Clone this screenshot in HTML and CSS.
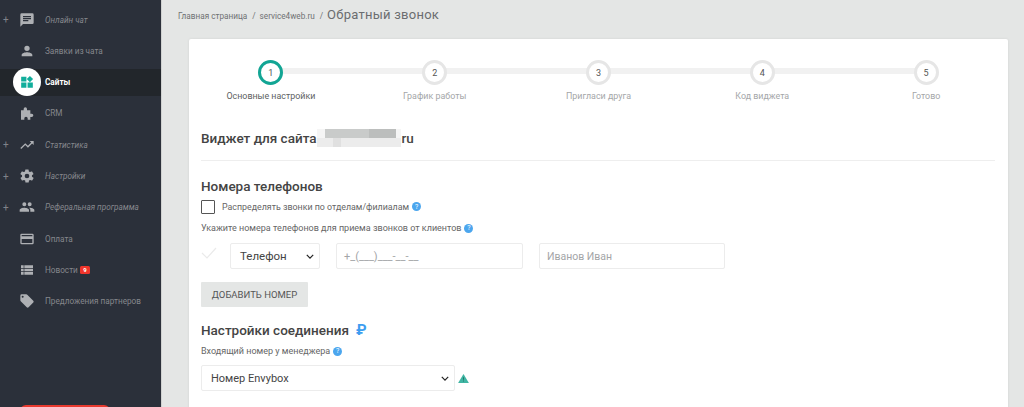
FILE: index.html
```html
<!DOCTYPE html>
<html lang="ru">
<head>
<meta charset="utf-8">
<title>Обратный звонок</title>
<link rel="stylesheet" href="styles.css">
</head>
<body>
<div class="app">
  <aside class="sidebar">
    <nav class="menu">
      <a class="item"><span class="plus">+</span><svg class="ic" viewBox="0 0 24 24"><path d="M20 2H4a2 2 0 0 0-2 2v18l4-4h14a2 2 0 0 0 2-2V4a2 2 0 0 0-2-2zM6 9h12v2H6V9zm8 5H6v-2h8v2zm4-6H6V6h12v2z"/></svg><span class="label it">Онлайн чат</span></a>
      <a class="item"><span class="plus"></span><svg class="ic" viewBox="0 0 24 24"><path d="M12 12a4 4 0 1 0 0-8 4 4 0 0 0 0 8zm0 2c-2.7 0-8 1.3-8 4v2h16v-2c0-2.700-5.300-4-8-4z"/></svg><span class="label">Заявки из чата</span></a>
      <a class="item active"><span class="plus"></span><span class="bubble"><svg class="ic-active" viewBox="0 0 24 24"><path d="M2 3h9v8H2zM2 13h9v9H2zM13 13h9v9h-9zM17 1.600 22.400 7 17 12.400 11.600 7z"/></svg></span><span class="label">Сайты</span></a>
      <a class="item"><span class="plus"></span><svg class="ic" viewBox="0 0 24 24"><path d="M3 8h4V6a2.500 2.500 0 0 1 5 0v2h5v5h2a2.500 2.500 0 0 1 0 5h-2v4h-4v-2a2.500 2.500 0 0 0-5 0v2H3z"/></svg><span class="label">CRM</span></a>
      <a class="item"><span class="plus">+</span><svg class="ic" viewBox="0 0 24 24"><path d="M16 6l2.300 2.300-4.900 4.900-4-4L2 16.600 3.400 18l6-6 4 4 6.300-6.300L22 12V6z"/></svg><span class="label it">Статистика</span></a>
      <a class="item"><span class="plus">+</span><svg class="ic" viewBox="0 0 24 24"><path d="M19.400 13a7.500 7.500 0 0 0 0-2l2.100-1.600a.5.500 0 0 0 .1-.6l-2-3.500a.5.500 0 0 0-.6-.2l-2.500 1a7.300 7.300 0 0 0-1.700-1l-.4-2.600a.5.500 0 0 0-.5-.4h-4a.5.500 0 0 0-.5.400l-.4 2.600a7.700 7.700 0 0 0-1.700 1l-2.500-1a.5.500 0 0 0-.6.200l-2 3.500a.5.500 0 0 0 .1.600L4.600 11a7.900 7.900 0 0 0 0 2l-2.100 1.600a.5.500 0 0 0-.1.600l2 3.500c.1.200.4.300.6.200l2.500-1c.5.400 1.100.7 1.700 1l.4 2.600c0 .2.200.4.500.4h4c.3 0 .5-.2.500-.4l.4-2.600a7.300 7.300 0 0 0 1.700-1l2.500 1c.2.100.5 0 .6-.2l2-3.500a.5.500 0 0 0-.1-.6L19.400 13zM12 15.500a3.500 3.500 0 1 1 0-7 3.500 3.500 0 0 1 0 7z"/></svg><span class="label it">Настройки</span></a>
      <a class="item"><span class="plus">+</span><svg class="ic" viewBox="0 0 24 24"><path d="M16 11a3 3 0 1 0 0-6 3 3 0 0 0 0 6zm-8 0a3 3 0 1 0 0-6 3 3 0 0 0 0 6zm0 2c-2.300 0-7 1.200-7 3.500V19h14v-2.500C15 14.200 10.300 13 8 13zm8 0h-1c1.200.8 2 2 2 3.500V19h6v-2.500c0-2.300-4.700-3.500-7-3.500z"/></svg><span class="label it">Реферальная программа</span></a>
      <a class="item"><span class="plus"></span><svg class="ic" viewBox="0 0 24 24"><path d="M20 4H4a2 2 0 0 0-2 2v12a2 2 0 0 0 2 2h16a2 2 0 0 0 2-2V6a2 2 0 0 0-2-2zm0 14H4v-6h16v6zm0-10H4V6h16v2z"/></svg><span class="label">Оплата</span></a>
      <a class="item"><span class="plus"></span><svg class="ic" viewBox="0 0 24 24"><path d="M3 5h4v4H3zM8 5h13v4H8zM3 10h4v4H3zM8 10h13v4H8zM3 15h4v4H3zM8 15h13v4H8z"/></svg><span class="label">Новости</span><span class="badge">9</span></a>
      <a class="item"><span class="plus"></span><svg class="ic" viewBox="0 0 24 24"><path d="M21.400 11.600l-9-9A2 2 0 0 0 11 2H4a2 2 0 0 0-2 2v7c0 .6.200 1.100.6 1.400l9 9a2 2 0 0 0 2.800 0l7-7a2 2 0 0 0 0-2.800zM5.500 7a1.500 1.500 0 1 1 0-3 1.500 1.500 0 0 1 0 3z"/></svg><span class="label">Предложения партнеров</span></a>
    </nav>
    <div class="red-btn"></div>
  </aside>
  <main class="main">
    <div class="crumbs">
      <span>Главная страница</span><span class="sep">/</span><span>service4web.ru</span><span class="sep">/</span><h1 class="page-title">Обратный звонок</h1>
    </div>
    <section class="card">
      <ol class="steps">
        <li class="step current"><span class="dot">1</span><span class="step-name">Основные настройки</span></li>
        <li class="step"><span class="dot">2</span><span class="step-name">График работы</span></li>
        <li class="step"><span class="dot">3</span><span class="step-name">Пригласи друга</span></li>
        <li class="step"><span class="dot">4</span><span class="step-name">Код виджета</span></li>
        <li class="step"><span class="dot">5</span><span class="step-name">Готово</span></li>
      </ol>
      <div class="body">
        <h2 class="widget-title">Виджет для сайта<span class="pixel"><svg viewBox="0 0 84 18" width="84" height="18" shape-rendering="crispEdges"><rect width="84" height="18" fill="#f5f5f5"/><rect x="8" y="0" width="45" height="9" fill="#c9cbca"/><rect x="52" y="0" width="27" height="9" fill="#bcbebd"/><rect x="0" y="9" width="84" height="9" fill="#ececec"/><rect x="16" y="9" width="8" height="9" fill="#e0e0e0"/></svg></span>ru</h2>
        <hr class="rule">
        <h3 class="sec-title">Номера телефонов</h3>
        <label class="check-row"><span class="box"></span><span>Распределять звонки по отделам/филиалам</span><span class="help">?</span></label>
        <p class="hint">Укажите номера телефонов для приема звонков от клиентов<span class="help">?</span></p>
        <div class="phone-row">
          <svg class="tick" viewBox="0 0 16 12"><path d="M1 6l5 5L15 1" fill="none" stroke="#eaeaea" stroke-width="1.200"/></svg>
          <div class="field select small-sel"><span>Телефон</span><svg class="chev" viewBox="0 0 10 6"><path d="M1 1l4 4 4-4" fill="none" stroke="#222" stroke-width="1.500"/></svg></div>
          <div class="field ph phone-in">+_(___)___-__-__</div>
          <div class="field ph name-in">Иванов Иван</div>
        </div>
        <div class="btn">ДОБАВИТЬ НОМЕР</div>
        <h3 class="sec-title conn">Настройки соединения<span class="ruble">₽</span></h3>
        <p class="hint second">Входящий номер у менеджера<span class="help">?</span></p>
        <div class="select-row">
          <div class="field select wide-sel"><span>Номер Envybox</span><svg class="chev" viewBox="0 0 10 6"><path d="M1 1l4 4 4-4" fill="none" stroke="#222" stroke-width="1.500"/></svg></div>
          <svg class="warn" viewBox="0 0 12 10"><path d="M6 0l6 10H0z" fill="#3fb5a3"/><path d="M5.500 3.500h1v3h-1zM5.500 7.300h1v1h-1z" fill="#1d6f63"/></svg>
        </div>
      </div>
    </section>
  </main>
</div>
</body>
</html>
```
FILE: styles.css
```css
* { box-sizing: border-box; }
html, body { margin: 0; height: 100%; overflow: hidden; }
body { font-family: Roboto, "Liberation Sans", sans-serif; background: #e4e6e5; color: #333; }
.app { display: flex; height: 407px; overflow: hidden; }

.sidebar { width: 162px; flex: none; background: #2b303a; border-right: 1px solid #d0d2d1; position: relative; height: 407px; overflow: hidden; }
.menu { display: flex; flex-direction: column; padding-top: 4px; }
.item { display: flex; align-items: center; height: 31.35px; color: #85878c; font-size: 8.200px; position: relative; }
.plus { width: 16px; padding-left: 3px; font-size: 10px; color: #80838a; flex: none; }
.ic { width: 16px; height: 16px; fill: #aeb0b4; flex: none; margin-left: 3px; margin-right: 10px; }
.label.it { font-style: italic; }
.item.active { background: #22262b; color: #fff; font-weight: 700; height: 27px; margin: 2px 0 2px; }
.bubble { width: 28px; height: 28px; border-radius: 50%; background: #fff; display: flex; align-items: center; justify-content: center; flex: none; margin-left: -3px; margin-right: 4px; }
.ic-active { width: 14px; height: 14px; fill: #12ae9c; }
.badge { background: #f0352b; color: #fff; font-size: 6px; font-weight: 700; border-radius: 1.500px; padding: 1px 3.500px; margin-left: 2px; line-height: 6px; }
.red-btn { position: absolute; left: 20px; bottom: -8px; width: 90px; height: 10px; border-radius: 6px 6px 0 0; background: #e8392e; }

.main { flex: 1; min-width: 0; padding: 0 16px 0 27px; }
.crumbs { display: flex; align-items: baseline; height: 39px; padding-top: 7px; margin-left: -11px; font-size: 8.200px; color: #6f7173; }
.sep { margin: 0 4px 0 5px; }
.page-title { margin: 0; font-size: 13px; line-height: 16px; font-weight: 400; color: #6b6d70; letter-spacing: .25px; }

.card { background: #fff; border-radius: 2px; height: 380px; box-shadow: 0 0 3px rgba(0,0,0,.08); }
.steps { list-style: none; margin: 0; padding: 21px 0 0; display: grid; grid-template-columns: repeat(5, 1fr); position: relative; }
.steps::before { content: ""; position: absolute; top: 29px; left: 82px; right: 82px; height: 6px; background: #f1f1f1; }
.step { display: flex; flex-direction: column; align-items: center; position: relative; font-size: 8.900px; color: #a4a6a8; }
.dot { width: 25px; height: 25px; border: 3px solid #e6e6e6; border-radius: 50%; background: #fff; color: #555; display: flex; align-items: center; justify-content: center; font-size: 9px; }
.step-name { margin-top: 6px; line-height: 11px; }
.step.current { color: #5d5f62; }
.step.current .dot { border-color: #12a594; }

.body { padding: 0 13px 0 12px; }
.widget-title { margin: 27px 0 0; font-size: 13.500px; font-weight: 500; line-height: 18px; color: #444; display: flex; align-items: center; }
.pixel { display: block; height: 18px; margin-right: 1px; }
.rule { border: 0; height: 1px; background: #eeeeee; margin: 13px 0 0; }
.sec-title { margin: 16px 0 0; font-size: 13.500px; font-weight: 500; line-height: 18px; color: #444; }
.check-row { display: flex; align-items: center; margin-top: 4px; font-size: 8.850px; color: #666; height: 15px; }
.box { width: 14px; height: 14px; border: 1.500px solid #555; border-radius: 1px; margin-right: 7px; }
.help { display: inline-flex; width: 9px; height: 9px; border-radius: 50%; background: #4ba6ee; color: #fff; font-size: 7px; align-items: center; justify-content: center; margin-left: 3px; }
.hint { margin: 9px 0 0; font-size: 9px; line-height: 11px; color: #666; display: flex; align-items: center; }
.phone-row { display: flex; align-items: center; margin-top: 9px; height: 26px; }
.tick { width: 16px; height: 12px; flex: none; margin-right: 13px; margin-top: -6px; }
.field { height: 26px; border: 1px solid #ececec; border-radius: 2px; display: flex; align-items: center; background: #fff; font-size: 11.500px; }
.select { justify-content: space-between; color: #444; padding: 0 2px 0 9px; }
.chev { width: 8px; height: 5px; margin-right: 3px; }
.small-sel { width: 90px; margin-right: 16px; }
.ph { color: #a3a5a7; padding-left: 7px; font-size: 11px; }
.phone-in { width: 187px; margin-right: 16px; }
.name-in { width: 186px; font-size: 10.500px; }
.btn { width: 107px; height: 25px; margin-top: 13px; background: #e4e6e5; color: #555; font-size: 9.500px; display: flex; align-items: center; justify-content: center; border-radius: 1px; }
.conn { margin-top: 14px; display: flex; align-items: center; }
.ruble { color: #3d9df0; font-size: 15px; margin-left: 7px; font-weight: 700; }
.hint.second { margin-top: 7px; }
.select-row { display: flex; align-items: center; margin-top: 8px; }
.wide-sel { width: 254px; font-size: 11px; }
.warn { width: 11px; height: 9px; margin-left: 3px; }
```
